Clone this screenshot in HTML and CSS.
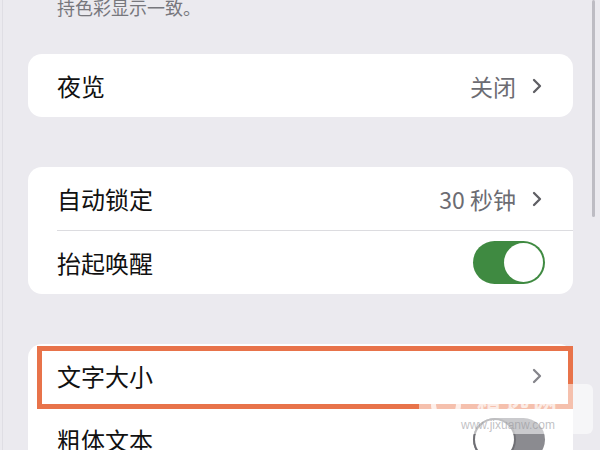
FILE: index.html
```html
<!DOCTYPE html>
<html>
<head>
  <meta charset="utf-8">
  <meta name="viewport" content="width=device-width, initial-scale=1.0">
  <title>显示与亮度</title>
  <link rel="stylesheet" href="styles.css">
</head>
<body>
  <div class="screen">
    <p class="note">持色彩显示一致。</p>

    <div class="card">
      <div class="row">
        <span class="label">夜览</span>
        <span class="value">关闭
          <svg class="chevron" viewBox="0 0 10 16"><path d="M2 2l6 6-6 6"/></svg>
        </span>
      </div>
    </div>

    <div class="card">
      <div class="row">
        <span class="label">自动锁定</span>
        <span class="value">30 秒钟
          <svg class="chevron" viewBox="0 0 10 16"><path d="M2 2l6 6-6 6"/></svg>
        </span>
      </div>
      <div class="divider"></div>
      <div class="row">
        <span class="label">抬起唤醒</span>
        <span class="toggle on"><span class="knob"></span></span>
      </div>
    </div>

    <div class="card card-last">
      <div class="highlight"></div>
      <div class="row">
        <span class="label">文字大小</span>
        <span class="value">
          <svg class="chevron light" viewBox="0 0 10 16"><path d="M2 2l6 6-6 6"/></svg>
        </span>
      </div>
      <div class="divider"></div>
      <div class="row">
        <span class="label">粗体文本</span>
        <span class="toggle off"><span class="knob"></span></span>
      </div>
    </div>

    <div class="scroll-bar"></div>
    <div class="watermark">
      <span class="wm-logo"></span>
      <span class="wm-name">精选网</span>
      <span class="wm-url">www.jixuanw.com</span>
    </div>
  </div>
</body>
</html>
```

FILE: styles.css
```css
body {
  margin: 0;
  background: #ebeaef;
  font-family: "Noto Sans CJK SC", "Noto Sans", sans-serif;
  overflow: hidden;
}

.screen {
  position: relative;
  height: 450px;
  overflow: hidden;
  border-left: 1px solid #dfdee4;
  margin-left: 2px;
}

.note {
  margin: -4px 0 0 0;
  padding-left: 54px;
  font-size: 18px;
  line-height: 22px;
  color: #77777d;
}

.card {
  position: relative;
  background: #fff;
  border-radius: 14px;
  margin: 36px 27px 0 25px;
}
.card + .card {
  margin-top: 50px;
}

.row {
  height: 63px;
  display: flex;
  align-items: center;
  justify-content: space-between;
  padding: 0 28px 0 29px;
}

.label {
  font-size: 24px;
  color: #111;
}

.value {
  display: flex;
  align-items: center;
  gap: 16px;
  font-size: 23px;
  color: #6c6c72;
  padding-right: 3px;
}

.chevron {
  width: 10px;
  height: 16px;
  fill: none;
  stroke: #5f5f64;
  stroke-width: 2.3;
  stroke-linecap: round;
  stroke-linejoin: round;
}
.chevron.light {
  stroke: #85858b;
}

.divider {
  height: 1px;
  background: #dcdce0;
  margin-left: 29px;
}

.toggle {
  width: 72px;
  height: 43px;
  border-radius: 22px;
  display: flex;
  align-items: center;
  padding: 0 2px;
  box-sizing: border-box;
}
.toggle .knob {
  width: 39px;
  height: 39px;
  border-radius: 50%;
  background: #fff;
}
.toggle.on {
  background: #3f8a41;
  justify-content: flex-end;
}
.toggle.off {
  background: #8b8b90;
  justify-content: flex-start;
}
.toggle.off .knob {
  box-shadow: 0 0 0 2px #6f6f74;
}

.highlight {
  position: absolute;
  left: 9px;
  right: 0;
  top: 2px;
  height: 63px;
  border: 5px solid #e8734a;
  box-sizing: border-box;
}

.scroll-bar {
  position: absolute;
  right: 5px;
  top: 0;
  width: 3px;
  height: 217px;
  border-radius: 2px;
  background: #bdbcc3;
}

.watermark {
  position: absolute;
  left: 416px;
  top: 384px;
  width: 174px;
  height: 50px;
  border-radius: 6px;
  background: rgba(255, 255, 255, 0.55);
}
.wm-logo {
  position: absolute;
  left: 12px;
  top: 6px;
  width: 20px;
  height: 20px;
  border-radius: 50%;
  border: 5px solid rgba(255, 255, 255, 0.75);
}
.wm-name {
  position: absolute;
  left: 58px;
  top: 2px;
  font-size: 24px;
  line-height: 28px;
  font-weight: bold;
  letter-spacing: 4px;
  color: rgba(255, 255, 255, 0.7);
}
.wm-url {
  position: absolute;
  left: 14px;
  top: 34px;
  width: 150px;
  text-align: center;
  font-family: "Liberation Sans", sans-serif;
  font-size: 12px;
  line-height: 14px;
  color: rgba(150, 150, 155, 0.6);
}
```
